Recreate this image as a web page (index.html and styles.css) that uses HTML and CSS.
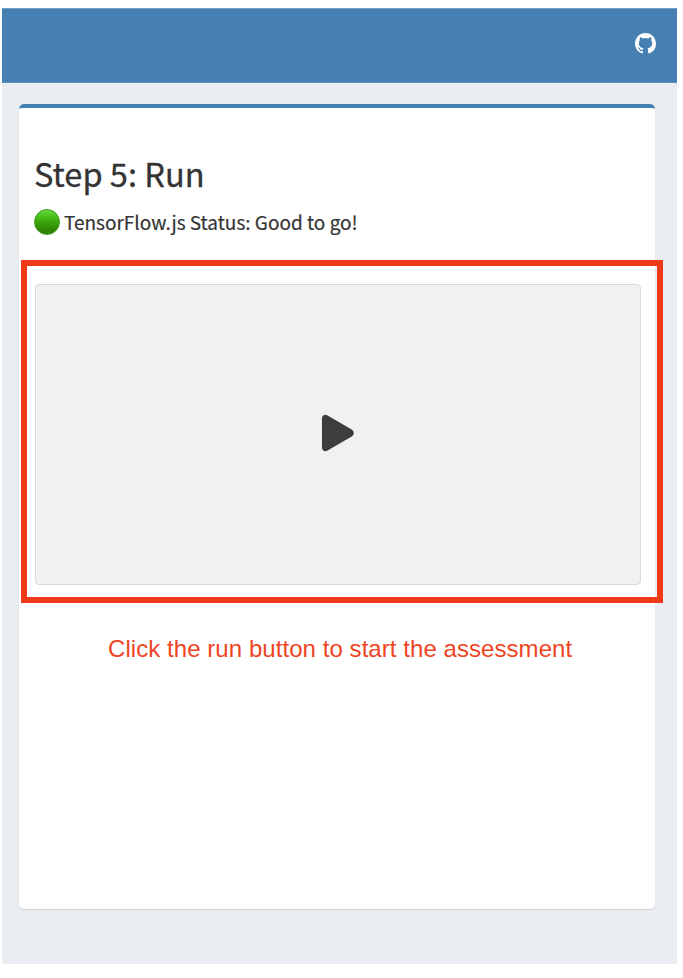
FILE: index.html
```
<!DOCTYPE html>
<html lang="en">
<head>
<meta charset="utf-8">
<title>Step 5: Run</title>
<link rel="stylesheet" href="styles.css">
</head>
<body>
<div class="app">
  <header class="navbar">
    <a class="github" aria-label="GitHub">
      <svg viewBox="0 0 16 16"><path d="M8 0C3.58 0 0 3.58 0 8c0 3.54 2.29 6.53 5.47 7.59.4.07.55-.17.55-.38 0-.19-.01-.82-.01-1.49-2.01.37-2.53-.49-2.69-.94-.09-.23-.48-.94-.82-1.13-.28-.15-.68-.52-.01-.53.63-.01 1.08.58 1.23.82.72 1.21 1.87.87 2.33.66.07-.52.28-.87.51-1.07-1.78-.2-3.64-.89-3.64-3.95 0-.87.31-1.59.82-2.15-.08-.2-.36-1.02.08-2.12 0 0 .67-.21 2.2.82a7.6 7.6 0 0 1 4 0c1.53-1.04 2.2-.82 2.2-.82.44 1.1.16 1.92.08 2.12.51.56.82 1.27.82 2.15 0 3.07-1.87 3.75-3.65 3.95.29.25.54.73.54 1.48 0 1.07-.01 1.93-.01 2.2 0 .21.15.46.55.38A8.01 8.01 0 0 0 16 8c0-4.42-3.58-8-8-8z"/></svg>
    </a>
  </header>
  <main class="card">
    <h1 class="title">Step 5: Run</h1>
    <p class="status"><span class="dot"></span><span class="status-text">TensorFlow.js Status: Good to go!</span></p>
    <div class="highlight">
      <button class="run" aria-label="Run">
        <svg viewBox="0 0 33 38"><path d="M1 4.500C1 1.200 4 0 6.600 1.500L30.700 15.600C33.400 17.200 33.400 20.800 30.700 22.400L6.600 36.500C4 38 1 36.800 1 33.500Z"/></svg>
      </button>
    </div>
    <p class="hint">Click the run button to start the assessment</p>
  </main>
</div>
</body>
</html>
```

FILE: styles.css
```
* {
  box-sizing: border-box;
}

body {
  margin: 0;
  background: #fff;
  color: #333;
  font-family: "Noto Sans CJK SC", "Noto Sans", sans-serif;
}

.app {
  width: 675px;
  height: 956px;
  margin: 8px 0 0 2px;
  background: #e9edf2;
}

.navbar {
  display: flex;
  justify-content: flex-end;
  height: 75px;
  padding: 24px 21px 0 0;
  background: #4680b3;
  border-top: 1px solid #729dc4;
  border-bottom: 1px solid #5f92be;
}

.github {
  width: 21px;
  height: 21px;
}

.github svg {
  display: block;
  width: 21px;
  height: 21px;
  fill: #fff;
}

.card {
  width: 636px;
  height: 805px;
  margin: 21px 0 0 17px;
  padding-top: 41px;
  background: #fff;
  border-top: 4px solid #4680b3;
  border-radius: 5px;
  box-shadow: 0 1px 1px rgba(0, 0, 0, 0.12);
}

.title {
  margin: 0 0 0 15px;
  font-size: 32.6px;
  font-weight: 400;
  line-height: 48px;
  white-space: nowrap;
  -webkit-text-stroke: 0.3px #333;
}

.status {
  display: flex;
  align-items: center;
  height: 30px;
  margin: 10px 0 0 15px;
  font-size: 19px;
  line-height: 30px;
  white-space: nowrap;
  -webkit-text-stroke: 0.2px #333;
}

.dot {
  width: 26px;
  height: 26px;
  margin-right: 4px;
  border: 1px solid #409821;
  border-radius: 50%;
  background: linear-gradient(#67dc43 0%, #4bc41c 24%, #3ba80c 48%, #2c8500 85%, #328b08 100%);
}

.highlight {
  width: 642px;
  height: 343px;
  margin: 23px 0 0 2px;
  padding: 18px 16px 0 8px;
  border: 6px solid #ee3a18;
}

.run {
  display: flex;
  align-items: center;
  justify-content: center;
  width: 606px;
  height: 301px;
  padding: 0 2px 3px 0;
  background: #f1f1f1;
  border: 1px solid #d9d9d9;
  border-radius: 4px;
}

.run svg {
  width: 33px;
  height: 38px;
  fill: #3d3d3d;
}

.hint {
  margin: 31px 0 0 89px;
  color: #ef4424;
  font-family: "Liberation Sans", Arial, sans-serif;
  font-size: 24px;
  line-height: 30px;
  letter-spacing: 0.06px;
  white-space: nowrap;
}
```
